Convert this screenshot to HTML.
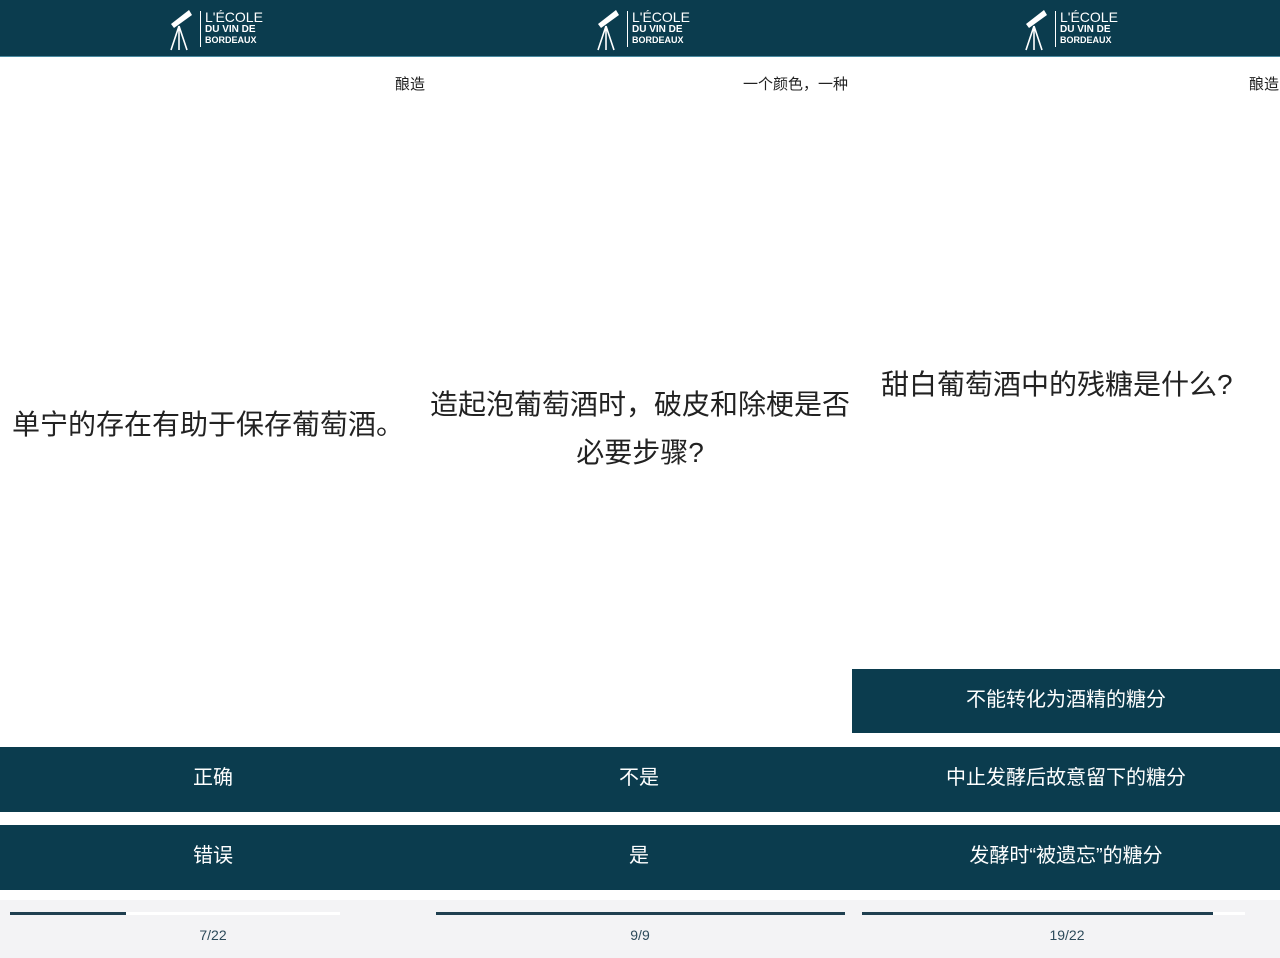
<!DOCTYPE html>
<html><head><meta charset="utf-8"><style>
*{margin:0;padding:0;box-sizing:border-box}
body{width:1280px;height:958px;position:relative;background:#fff;font-family:"Liberation Sans","Noto Sans CJK SC",sans-serif;overflow:hidden}
.a{position:absolute}
.hdr{left:0;top:0;width:1280px;height:57px;background:#0b3c4e;border-bottom:1px solid #4a8aa0}
.logo{width:100px;height:50px;top:4px}
.logo .t{position:absolute;left:36px;color:#fff;line-height:1}
.btn{background:#0b3c4e;color:#fff;font-size:20px;display:flex;align-items:center;justify-content:center;padding-bottom:8px}
.cat{font-size:15px;color:#222;top:73px}
.q{font-size:28px;color:#222;line-height:48px}
.foot{left:0;top:900px;width:1280px;height:58px;background:#f3f3f5}
.bar{height:3px;top:912px}
.num{font-size:14px;color:#2c4a5a;top:927px;width:100px;text-align:center}
</style></head><body>
<div class="a hdr"></div>
<div class="a logo" style="left:165px"><svg width="34" height="50" viewBox="0 0 34 50"><path d="M6 20 L24 6 L27 11 L9 24Z" fill="#fff"/><path d="M14 22 L6 46 M14 22 L14 46 M14 22 L22 46" stroke="#fff" stroke-width="1.6" fill="none"/></svg><div class="t" style="top:6px;font-size:14px;font-weight:300;left:40px">L'ÉCOLE</div><div class="t" style="top:21px;font-size:10px;font-weight:bold;left:40px">DU VIN DE</div><div class="t" style="top:32px;font-size:9px;font-weight:bold;left:40px">BORDEAUX</div><div class="a" style="left:35px;top:7px;width:1px;height:36px;background:#fff"></div></div>
<div class="a logo" style="left:592px"><svg width="34" height="50" viewBox="0 0 34 50"><path d="M6 20 L24 6 L27 11 L9 24Z" fill="#fff"/><path d="M14 22 L6 46 M14 22 L14 46 M14 22 L22 46" stroke="#fff" stroke-width="1.6" fill="none"/></svg><div class="t" style="top:6px;font-size:14px;font-weight:300;left:40px">L'ÉCOLE</div><div class="t" style="top:21px;font-size:10px;font-weight:bold;left:40px">DU VIN DE</div><div class="t" style="top:32px;font-size:9px;font-weight:bold;left:40px">BORDEAUX</div><div class="a" style="left:35px;top:7px;width:1px;height:36px;background:#fff"></div></div>
<div class="a logo" style="left:1020px"><svg width="34" height="50" viewBox="0 0 34 50"><path d="M6 20 L24 6 L27 11 L9 24Z" fill="#fff"/><path d="M14 22 L6 46 M14 22 L14 46 M14 22 L22 46" stroke="#fff" stroke-width="1.6" fill="none"/></svg><div class="t" style="top:6px;font-size:14px;font-weight:300;left:40px">L'ÉCOLE</div><div class="t" style="top:21px;font-size:10px;font-weight:bold;left:40px">DU VIN DE</div><div class="t" style="top:32px;font-size:9px;font-weight:bold;left:40px">BORDEAUX</div><div class="a" style="left:35px;top:7px;width:1px;height:36px;background:#fff"></div></div>

<div class="a cat" style="left:395px">酿造</div>
<div class="a cat" style="left:743px">一个颜色，一种</div>
<div class="a cat" style="left:1249px">酿造</div>

<div class="a q" style="left:12px;top:401px">单宁的存在有助于保存葡萄酒。</div>
<div class="a q" style="left:426px;top:381px;width:428px;text-align:center">造起泡葡萄酒时，破皮和除梗是否必要步骤?</div>
<div class="a q" style="left:881px;top:361px">甜白葡萄酒中的残糖是什么?</div>

<div class="a btn" style="left:852px;top:669px;width:428px;height:64px">不能转化为酒精的糖分</div>
<div class="a btn" style="left:0;top:747px;width:426px;height:65px">正确</div>
<div class="a btn" style="left:426px;top:747px;width:426px;height:65px">不是</div>
<div class="a btn" style="left:852px;top:747px;width:428px;height:65px">中止发酵后故意留下的糖分</div>
<div class="a btn" style="left:0;top:825px;width:426px;height:65px">错误</div>
<div class="a btn" style="left:426px;top:825px;width:426px;height:65px">是</div>
<div class="a btn" style="left:852px;top:825px;width:428px;height:65px">发酵时“被遗忘”的糖分</div>

<div class="a foot"></div>
<div class="a bar" style="left:126px;width:214px;background:#fff"></div>
<div class="a bar" style="left:10px;width:116px;background:#1f3f50"></div>
<div class="a bar" style="left:436px;width:409px;background:#1f3f50"></div>
<div class="a bar" style="left:1213px;width:32px;background:#fff"></div>
<div class="a bar" style="left:862px;width:351px;background:#1f3f50"></div>
<div class="a num" style="left:163px">7/22</div>
<div class="a num" style="left:590px">9/9</div>
<div class="a num" style="left:1017px">19/22</div>
</body></html>
